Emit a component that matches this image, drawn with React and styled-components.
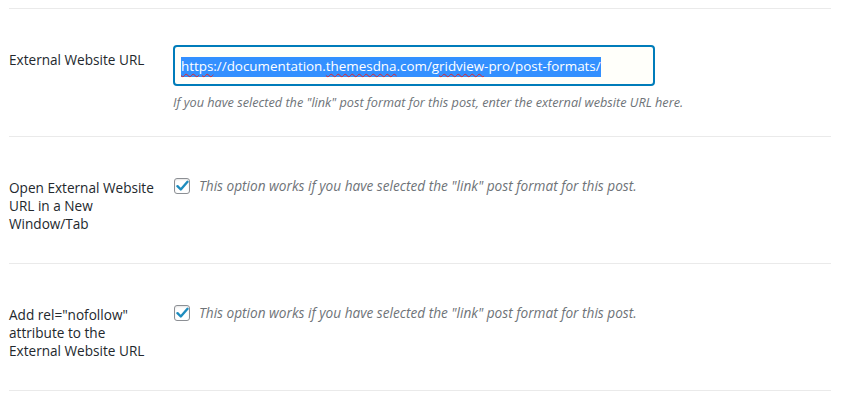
import React from "react";
import styled, { createGlobalStyle } from "styled-components";

const Global = createGlobalStyle`
  html, body { margin: 0; padding: 0; background: #fff; }
  body { font-family: "Open Sans", "Noto Sans", sans-serif; color: #23282d; }
`;

const Page = styled.div`
  padding: 8px 13px 0 9px;
`;

const Table = styled.div`
  border-top: 1px solid #eaeaea;
`;

const Row = styled.div`
  display: grid;
  grid-template-columns: 164px 1fr;
  border-bottom: 1px solid #eaeaea;
`;

const Label = styled.div`
  padding: 42px 16px 30px 0;
  font-size: 13.6px;
  line-height: 18px;
  color: #23282d;
`;

const Value = styled.div`
  padding: ${(p) => (p.$check ? "40px 0 25px 0" : "36px 0 25px 0")};
`;

const InputBox = styled.div`
  box-sizing: border-box;
  width: 482px;
  height: 41px;
  border: 2px solid #007cba;
  border-radius: 4px;
  background: #fffffa;
  display: flex;
  align-items: center;
  padding: 2px 6px 0;
  font-size: 13.4px;
  white-space: nowrap;
  overflow: hidden;
`;

const Selected = styled.span`
  background: #3390ff;
  color: #fff;
  line-height: 19px;
  padding-bottom: 1px;
`;

const Misspelled = styled.span`
  text-decoration: underline wavy #e0262b;
  text-decoration-thickness: 1px;
  text-underline-offset: 2px;
`;

const Help = styled.p`
  margin: 7px 0 0;
  font-size: 12.7px;
  line-height: 18px;
  font-style: italic;
  color: #6e7378;
`;

const CheckLine = styled.label`
  display: flex;
  align-items: center;
  gap: 9px;
  margin-left: 1px;
`;

const Box = styled.span`
  box-sizing: border-box;
  width: 16px;
  height: 16px;
  border: 1px solid #8c8f94;
  border-radius: 3px;
  background: #fff;
  display: inline-flex;
  align-items: center;
  justify-content: center;
  flex: none;
  box-shadow: inset 0 1px 2px rgba(0, 0, 0, 0.1);
`;

const CheckText = styled.span`
  font-size: 13.65px;
  line-height: 18px;
  font-style: italic;
  color: #6e7378;
`;

const Checkbox = () => (
  <Box>
    <svg width="13" height="12" viewBox="0 0 13 12">
      <path d="M1.5 6.2 L4.8 9.5 L11.5 1.8" fill="none" stroke="#1e8cbe" strokeWidth="2.4" strokeLinecap="round" strokeLinejoin="round" />
    </svg>
  </Box>
);

const optionText = 'This option works if you have selected the "link" post format for this post.';

export default function App() {
  return (
    <>
      <Global />
      <Page>
        <Table>
          <Row>
            <Label>External Website URL</Label>
            <Value>
              <InputBox>
                <Selected>
                  <Misspelled>https</Misspelled>://documentation.<Misspelled>themesdna</Misspelled>.com/<Misspelled>gridview</Misspelled>-pro/post-formats/
                </Selected>
              </InputBox>
              <Help>If you have selected the "link" post format for this post, enter the external website URL here.</Help>
            </Value>
          </Row>
          <Row>
            <Label>Open External Website URL in a New Window/Tab</Label>
            <Value $check>
              <CheckLine>
                <Checkbox />
                <CheckText>{optionText}</CheckText>
              </CheckLine>
            </Value>
          </Row>
          <Row>
            <Label>Add rel="nofollow" attribute to the External Website URL</Label>
            <Value $check>
              <CheckLine>
                <Checkbox />
                <CheckText>{optionText}</CheckText>
              </CheckLine>
            </Value>
          </Row>
        </Table>
      </Page>
    </>
  );
}
